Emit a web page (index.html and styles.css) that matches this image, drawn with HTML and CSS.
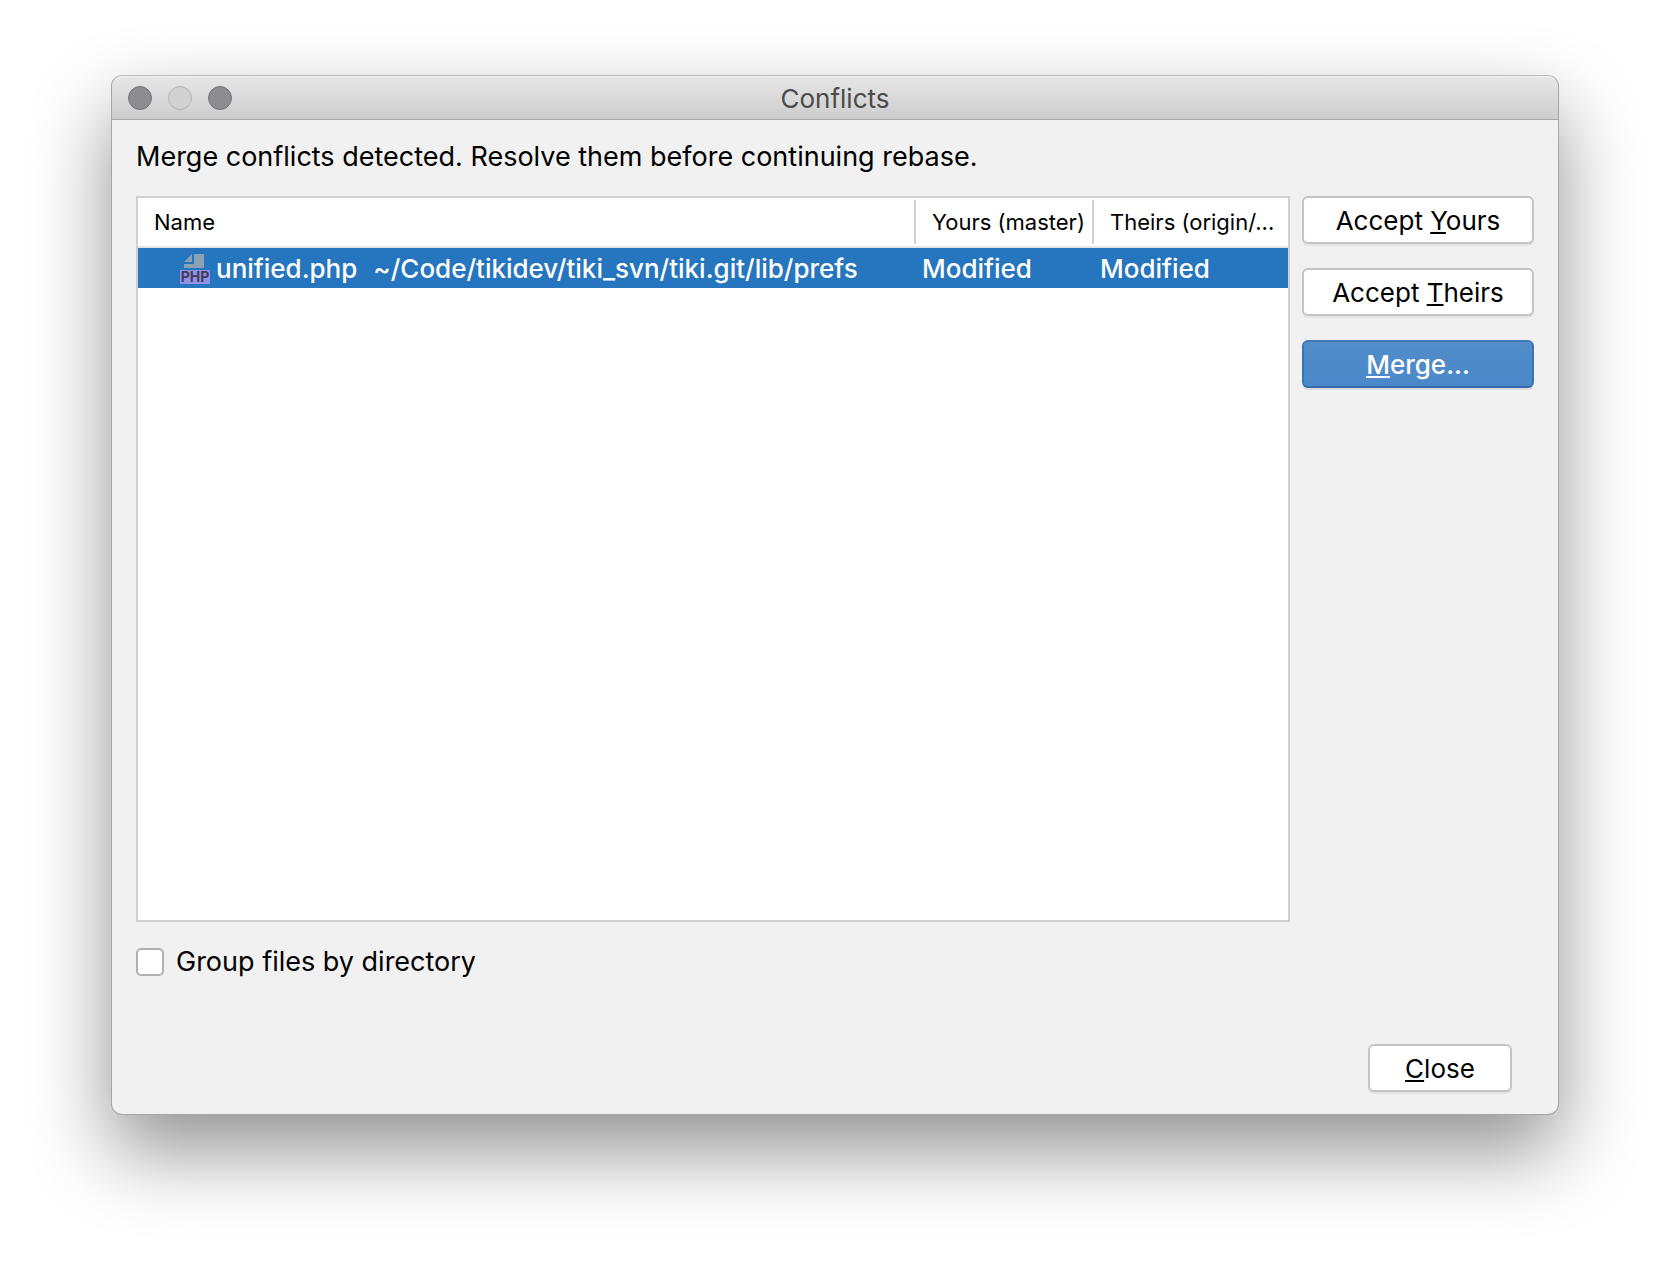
FILE: index.html
```html
<!DOCTYPE html>
<html lang="en">
<head>
    <meta charset="UTF-8">
    <title>Conflicts</title>
    <link rel="stylesheet" href="styles.css">
</head>
<body>
    <div class="dialog" role="dialog" aria-labelledby="dialog-title">
        <header class="titlebar">
            <div class="window-buttons">
                <button class="dot" aria-label="Close window"></button>
                <button class="dot dot-disabled" aria-label="Minimize" disabled></button>
                <button class="dot" aria-label="Zoom"></button>
            </div>
            <h1 id="dialog-title">Conflicts</h1>
        </header>

        <main class="content">
            <p class="message">Merge conflicts detected. Resolve them before continuing rebase.</p>

            <div class="main-row">
                <div class="file-list">
                    <table>
                        <colgroup>
                            <col>
                            <col class="col-yours">
                            <col class="col-theirs">
                        </colgroup>
                        <thead>
                            <tr>
                                <th>Name</th>
                                <th>Yours (master)</th>
                                <th>Theirs (origin/...</th>
                            </tr>
                        </thead>
                        <tbody>
                            <tr class="selected">
                                <td>
                                    <div class="file">
                                        <svg class="file-icon" width="30" height="30" viewBox="0 0 30 30">
                                            <path d="M4 8 L12 0 V8 Z M14 0 H24 V14 H4 V10 H14 Z" fill="#8aa1b4"/>
                                            <rect y="16" width="30" height="14" fill="#9191e6"/>
                                            <text x="15" y="28" text-anchor="middle">PHP</text>
                                        </svg>
                                        <span>unified.php</span>
                                        <span class="path">~/Code/tikidev/tiki_svn/tiki.git/lib/prefs</span>
                                    </div>
                                </td>
                                <td>Modified</td>
                                <td>Modified</td>
                            </tr>
                        </tbody>
                    </table>
                </div>

                <div class="actions">
                    <button class="btn">Accept <u>Y</u>ours</button>
                    <button class="btn">Accept <u>T</u>heirs</button>
                    <button class="btn btn-primary"><u>M</u>erge...</button>
                </div>
            </div>

            <div class="option">
                <input type="checkbox" id="group-files">
                <label for="group-files">Group files by directory</label>
            </div>

            <footer class="footer">
                <button class="btn btn-close"><u>C</u>lose</button>
            </footer>
        </main>
    </div>
</body>
</html>
```
FILE: styles.css
```css
* {
    box-sizing: border-box;
}

body {
    margin: 0;
    min-height: 100vh;
    padding: 75px 111px 147px;
    display: flex;
    background: white;
    font-family: Inter, "Liberation Sans", sans-serif;
    font-size: 26px;
    line-height: 32px;
    color: #000;
}

.dialog {
    flex: 1;
    min-width: 0;
    display: flex;
    flex-direction: column;
    border: 1px solid #a6a6a6;
    border-top-color: #b9b9b9;
    border-radius: 11px;
    background: #f1f1f1;
    box-shadow: 0 36px 80px rgba(0, 0, 0, 0.43);
    overflow: hidden;
}

/* title bar */
.titlebar {
    height: 44px;
    display: grid;
    grid-template-columns: 1fr auto 1fr;
    align-items: center;
    padding: 0 16px;
    background: linear-gradient(#e6e6e6, #cdcdcd);
    border-top: 1px solid #f4f4f4;
    border-bottom: 1px solid #a9a9a9;
}

.titlebar h1 {
    margin: 0;
    padding-top: 2px;
    font-size: 26px;
    font-weight: 400;
    color: #4b4b4b;
}

.window-buttons {
    display: flex;
    gap: 16px;
}

.dot {
    width: 24px;
    height: 24px;
    padding: 0;
    border: 1px solid #737277;
    border-radius: 50%;
    background: #8e8d92;
}

.dot-disabled {
    border-color: #b3b3b3;
    background: #d1d1d1;
}

/* body of the dialog */
.content {
    flex: 1;
    display: flex;
    flex-direction: column;
    padding: 21px 24px 22px;
}

.message {
    margin: 0 0 23px;
    font-size: 27px;
}

.main-row {
    flex: 1;
    display: flex;
    gap: 12px;
}

.file-list {
    flex: 1;
    min-width: 0;
    background: white;
    border: 2px solid #d0d0d0;
}

table {
    width: 100%;
    table-layout: fixed;
    border-collapse: separate;
    border-spacing: 0;
}

.col-yours {
    width: 178px;
}

.col-theirs {
    width: 194px;
}

th {
    height: 50px;
    padding: 0 0 0 16px;
    border-bottom: 2px solid #e4e6e6;
    background: linear-gradient(#d0d0d0, #d0d0d0) right center / 2px 44px no-repeat;
    font-size: 22px;
    font-weight: 400;
    text-align: left;
    white-space: nowrap;
}

th:last-child {
    background: none;
}

td {
    height: 40px;
    padding: 2px 6px 0;
    white-space: nowrap;
}

.selected {
    background: #2675bf;
    color: white;
    font-weight: 500;
}

.file {
    display: flex;
    align-items: center;
    padding-left: 36px;
}

.file-icon {
    margin-right: 6px;
}

.file-icon text {
    font-size: 14px;
    font-weight: 700;
    fill: #3f3d5c;
}

.path {
    margin-left: 16px;
}

/* buttons */
.actions {
    width: 232px;
    display: flex;
    flex-direction: column;
    gap: 24px;
}

.btn {
    height: 48px;
    padding: 2px 0 0;
    border: 2px solid #c4c4c4;
    border-radius: 6px;
    background: white;
    box-shadow: 0 2px 0 #e4e4e4;
    font: inherit;
    color: #000;
}

.btn u {
    text-decoration-thickness: 2px;
    text-underline-offset: 2px;
    text-decoration-skip-ink: none;
}

.btn-primary {
    border-color: #3f7abb #3b73b3 #346aab;
    background: linear-gradient(#528cc9, #4a89ca);
    box-shadow: 0 2px 0 #dadada;
    font-weight: 500;
    color: white;
}

.option {
    display: flex;
    align-items: center;
    gap: 12px;
    margin-top: 24px;
    font-size: 27px;
}

.option input {
    appearance: none;
    width: 28px;
    height: 28px;
    margin: 0;
    border: 2px solid #b0b0b0;
    border-radius: 5px;
    background: white;
}

.footer {
    display: flex;
    justify-content: flex-end;
    margin-top: 66px;
    padding-right: 22px;
}

.btn-close {
    width: 144px;
}
```
